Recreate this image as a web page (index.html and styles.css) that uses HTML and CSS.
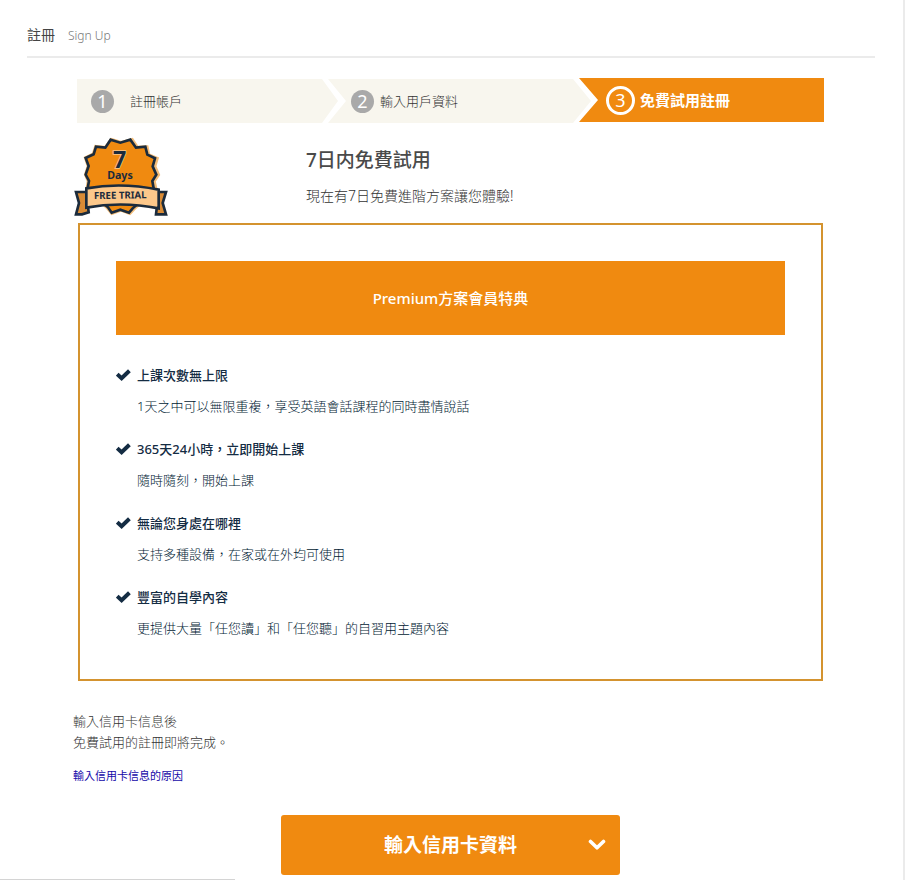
FILE: index.html
```html
<!DOCTYPE html>
<html lang="zh-Hant">
<head>
<meta charset="utf-8">
<meta name="viewport" content="width=device-width, initial-scale=1">
<title>註冊</title>
<link rel="stylesheet" href="styles.css">
</head>
<body>
<svg class="symbols" aria-hidden="true">
  <symbol id="check" viewBox="0 0 15 12"><path d="M1.2 5.2 5.6 9.2 13.4 1.8" fill="none" stroke="currentColor" stroke-width="4"/></symbol>
</svg>
<div class="page">
  <header class="page-header">
    <h1>註冊</h1>
    <span>Sign Up</span>
  </header>
  <main>
    <ol class="steps">
      <li class="step step-first"><span class="number">1</span>註冊帳戶</li>
      <li class="step step-second"><span class="number">2</span>輸入用戶資料</li>
      <li class="step step-current" aria-current="step"><span class="number">3</span>免費試用註冊</li>
    </ol>

    <section class="intro">
      <svg class="badge" viewBox="42 36 282 240" role="img" aria-label="7 Days Free Trial">
        <path class="badge-glow" d="M154 45 183 54 216 45 231 68 260 67 265 90 290 101 283 124 294 149 281 168 287 194 222 250 209 264 183 254 156 264 142 247 82 194 86 168 78 149 86 123 78 99 101 88 108 66 137 69Z"/>
        <path class="badge-star" d="M152 44 181 53 211 44 228 68 256 65 262 89 285 100 278 124 289 149 277 168 282 196 218 250 207 263 181 254 155 263 144 247 82 194 87 168 77 149 86 123 77 99 101 88 108 65 136 68Z"/>
        <path class="badge-tail" d="M48 201H79L86 262 66 268H48L57 234Z"/>
        <path class="badge-tail" d="M318 201H296L288 268H318L308 234Z"/>
        <path class="badge-ribbon" d="M79 190Q185 171 296 194L296 250Q185 228 79 248Z"/>
        <text class="badge-seven" x="179" y="130">7</text>
        <text class="badge-days" x="180" y="162">Days</text>
        <text class="badge-trial" x="181" y="221" transform="rotate(-1 181 221)">FREE TRIAL</text>
      </svg>
      <div class="intro-text">
        <h2>7日内免費試用</h2>
        <p>現在有7日免費進階方案讓您體驗!</p>
      </div>
    </section>

    <section class="plan">
      <h2>Premium方案會員特典</h2>
      <ul>
        <li><svg class="check"><use href="#check"/></svg><h3>上課次數無上限</h3><p>1天之中可以無限重複，享受英語會話課程的同時盡情說話</p></li>
        <li><svg class="check"><use href="#check"/></svg><h3>365天24小時，立即開始上課</h3><p>隨時隨刻，開始上課</p></li>
        <li><svg class="check"><use href="#check"/></svg><h3>無論您身處在哪裡</h3><p>支持多種設備，在家或在外均可使用</p></li>
        <li><svg class="check"><use href="#check"/></svg><h3>豐富的自學內容</h3><p>更提供大量「任您讀」和「任您聽」的自習用主題內容</p></li>
      </ul>
    </section>

    <section class="notes">
      <p>輸入信用卡信息後<br>免費試用的註冊即將完成。</p>
      <a href="#reason">輸入信用卡信息的原因</a>
    </section>

    <button class="submit" type="button">
      <span>輸入信用卡資料</span>
      <svg viewBox="0 0 18 12" aria-hidden="true"><path d="M2.5 2.5 9 8.8 15.5 2.5" fill="none" stroke="currentColor" stroke-width="3.6" stroke-linecap="round" stroke-linejoin="round"/></svg>
    </button>
  </main>
  <div class="status-edge"></div>
</div>
</body>
</html>
```
FILE: styles.css
```css
* {
  box-sizing: border-box;
}

body {
  margin: 0;
  background: #fff;
  color: #333;
  font-family: "Noto Sans", "Noto Sans CJK TC", sans-serif;
  font-size: 13px;
  font-weight: 300;
  line-height: 20px;
}

h1, h2, h3, p, ol, ul {
  margin: 0;
  padding: 0;
  list-style: none;
}

.symbols {
  display: none;
}

.page {
  min-height: 100vh;
  border-right: 2px solid #ebebeb;
}

.page-header {
  display: flex;
  align-items: baseline;
  gap: 13px;
  margin: 0 28px 0 27px;
  padding: 25px 0 10px;
  border-bottom: 2px solid #ebebeb;
}

.page-header h1 {
  color: #444;
  font-size: 14px;
  font-weight: 400;
}

.page-header span {
  color: #777;
  font-size: 12px;
}

main {
  padding: 20px 75px 5px 73px;
}

.steps {
  display: grid;
  grid-template-columns: 251fr 251fr 245fr;
  margin: 0 4px;
}

.step {
  display: flex;
  align-items: center;
  height: 44px;
  margin-top: 1px;
  background: #f8f6ee;
}

.step-first {
  gap: 16px;
  margin-right: -10px;
  padding-left: 14px;
  clip-path: polygon(0 0, calc(100% - 16px) 0, 100% 50%, calc(100% - 16px) 100%, 0 100%);
}

.step-second {
  gap: 6px;
  margin-right: -12px;
  padding-left: 23px;
  clip-path: polygon(0 0, calc(100% - 18px) 0, 100% 50%, calc(100% - 18px) 100%, 0 100%, 18px 50%);
}

.step-current {
  gap: 5px;
  margin: 0 0 1px;
  padding-left: 27px;
  background: #f08a10;
  color: #fff;
  font-size: 15px;
  font-weight: 700;
  clip-path: polygon(0 0, 100% 0, 100% 100%, 0 100%, 19px 50%);
}

.number {
  width: 23px;
  height: 23px;
  border-radius: 50%;
  background: #a9a9a9;
  color: #fff;
  font-size: 18px;
  font-weight: 400;
  line-height: 23px;
  text-align: center;
}

.step-current .number {
  width: 29px;
  height: 29px;
  border: 3px solid #fff;
  background: none;
}

.intro {
  display: grid;
  grid-template-columns: 232px 1fr;
  margin-top: 14px;
  padding-left: 1px;
}

.badge {
  width: 94px;
  height: 80px;
}

.badge path {
  stroke: #1b2b3c;
  stroke-width: 8;
}

.badge .badge-glow {
  fill: none;
  stroke: #f3bd79;
  stroke-width: 12;
}

.badge-star {
  fill: #f08a10;
}

.badge-tail {
  fill: #d98b35;
}

.badge-ribbon {
  fill: #fcc88b;
}

.badge text {
  fill: #1b2b3c;
  font-family: "Noto Sans", sans-serif;
  font-weight: 700;
  text-anchor: middle;
}

.badge .badge-seven {
  font-size: 70px;
  stroke: #fcc88b;
  stroke-width: 5;
  paint-order: stroke;
}

.badge .badge-days {
  font-size: 32px;
}

.badge .badge-trial {
  font-size: 29px;
}

.intro-text {
  padding-top: 10px;
}

.intro h2 {
  color: #4a4a4a;
  font-size: 19px;
  font-weight: 500;
  line-height: 26px;
}

.intro p {
  margin-top: 13px;
  font-size: 14px;
}

.plan {
  margin: 6px 5px 0;
  padding: 36px 36px 41px;
  border: 2px solid #d4932f;
  color: #142c43;
}

.plan h2 {
  margin-bottom: 30px;
  padding: 25px 0;
  background: #f08a10;
  color: #fff;
  font-size: 15px;
  font-weight: 500;
  line-height: 24px;
  text-align: center;
}

.plan li {
  display: grid;
  grid-template-columns: 15px 1fr;
  column-gap: 6px;
  row-gap: 11px;
}

.plan li + li {
  margin-top: 23px;
}

.plan h3 {
  font-size: 13px;
  font-weight: 500;
}

.plan p {
  grid-column: 2;
  color: #001a33;
}

.check {
  width: 15px;
  height: 12px;
  margin-top: 4px;
}

.notes {
  margin-top: 30px;
}

.notes p {
  margin-bottom: 12px;
  line-height: 21px;
}

.notes a {
  display: inline-block;
  color: #1408a8;
  font-size: 11px;
  font-weight: 400;
  text-decoration: none;
}

.submit {
  display: grid;
  grid-template-columns: 18px 1fr 18px;
  align-items: center;
  width: 100%;
  max-width: 339px;
  height: 60px;
  margin: 29px auto 0;
  padding: 0 14px;
  border: 0;
  border-radius: 3px;
  background: #f08a10;
  color: #fff;
  font: 700 19px/28px "Noto Sans", "Noto Sans CJK TC", sans-serif;
}

.submit span {
  grid-column: 2;
}

.submit svg {
  width: 18px;
  height: 12px;
}

.status-edge {
  position: fixed;
  bottom: 0;
  left: 0;
  width: 26%;
  border-top: 1px solid #d4d4d4;
}
```
